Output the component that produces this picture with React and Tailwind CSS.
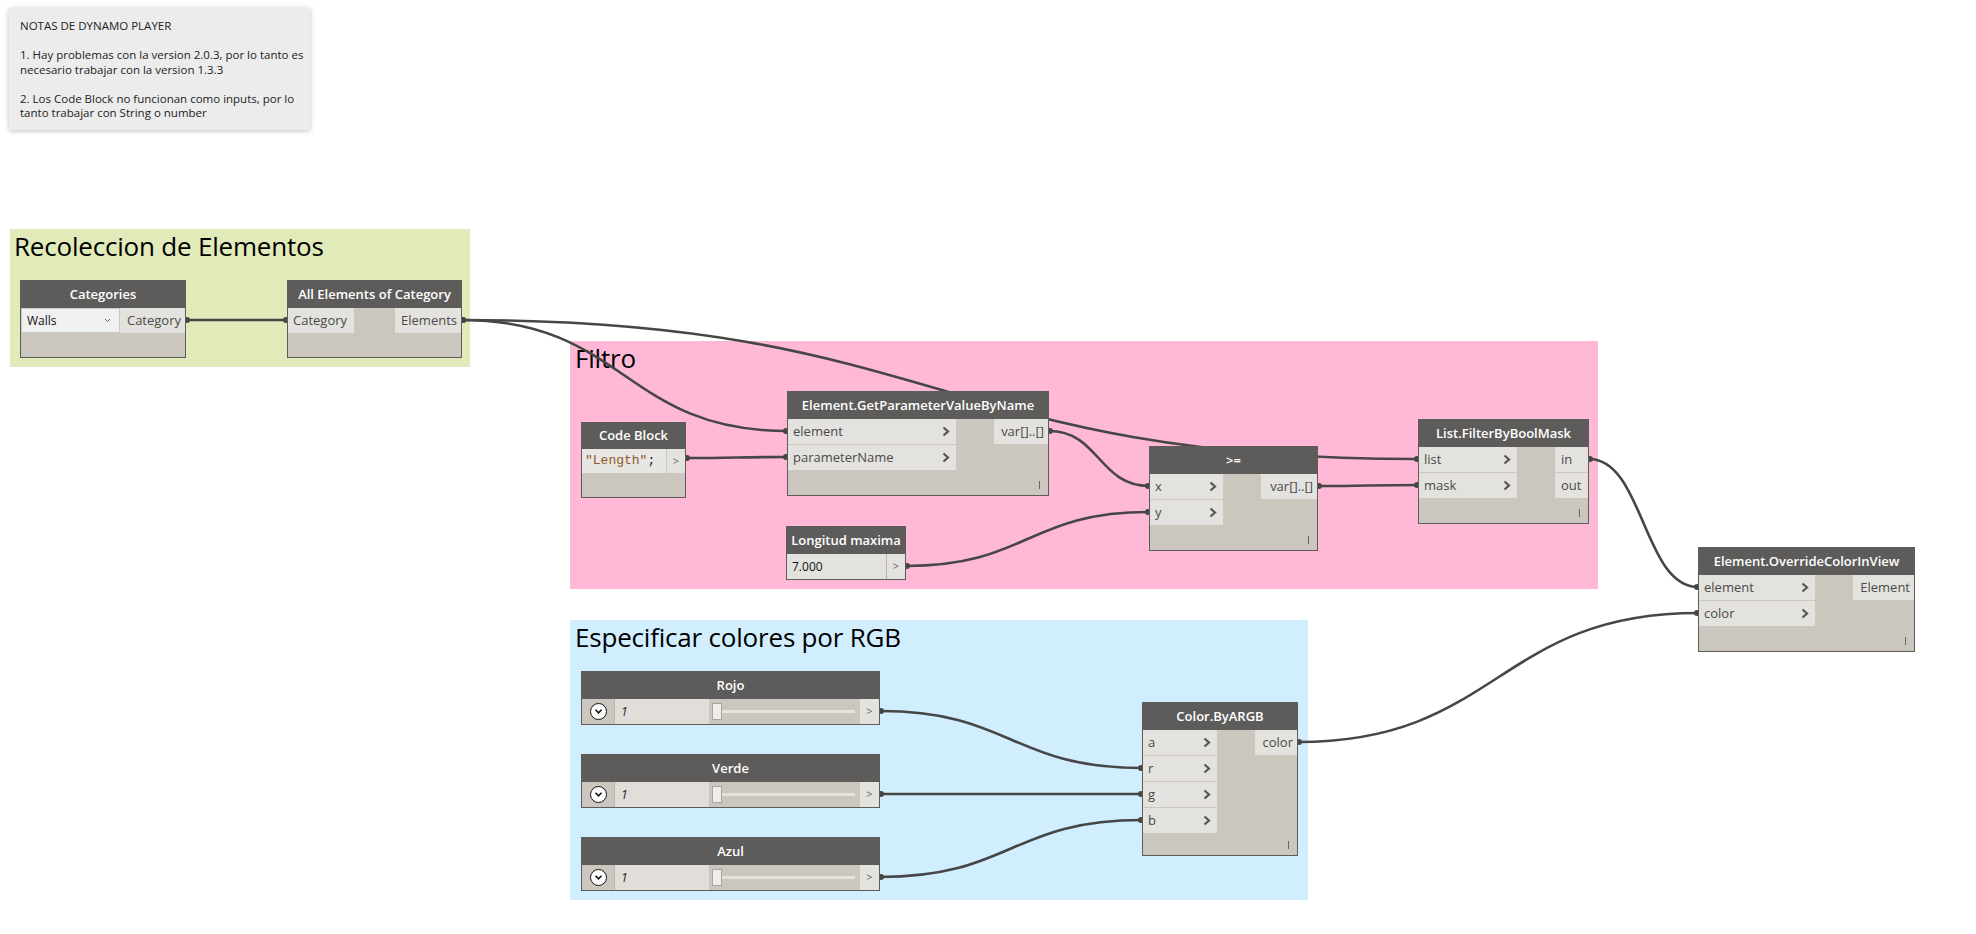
import React from "react";

const F = { fontFamily: '"Open Sans", "Noto Sans", sans-serif' };

function Chev() {
  return (
    <svg width="8" height="11" viewBox="0 0 8 11" className="shrink-0">
      <path d="M1.5 1.5 L6 5.5 L1.5 9.5" fill="none" stroke="#555" strokeWidth="2.2" />
    </svg>
  );
}

function Footer({ h = "h-[25px]" }) {
  return (
    <div className={`${h} flex items-end justify-end pr-[8px] pb-[6px]`}>
      <span className="w-[1px] h-[8px] bg-[#666]" />
    </div>
  );
}

function Node({ pos, title, inW, outW, inputs, outputs, footerH, outLeft }) {
  return (
    <div className={`absolute ${pos} border border-[#5e5c5a] bg-[#cbc6be] flex flex-col`}>
      <div className="h-[27px] bg-[#5e5c5a] text-white font-semibold text-[13px] flex items-center justify-center whitespace-nowrap">
        {title}
      </div>
      <div className="flex justify-between">
        <div className={`${inW} flex flex-col gap-[1px]`}>
          {inputs.map((p) => (
            <div key={p} className="h-[25px] bg-[#e4e2de] flex items-center justify-between pl-[5px] pr-[6px] text-[13px] text-[#4a4a4a]">
              <span>{p}</span>
              <Chev />
            </div>
          ))}
        </div>
        <div className={`${outW} flex flex-col gap-[1px]`}>
          {outputs.map((p) => (
            <div
              key={p}
              className={
                outLeft
                  ? "h-[25px] bg-[#e4e2de] flex items-center justify-start pl-[6px] text-[13px] text-[#4a4a4a] whitespace-nowrap"
                  : "h-[25px] bg-[#e4e2de] flex items-center justify-end pr-[4px] text-[13px] text-[#4a4a4a] whitespace-nowrap"
              }
            >
              {p}
            </div>
          ))}
        </div>
      </div>
      <Footer h={footerH || "h-[25px]"} />
    </div>
  );
}

function Slider({ pos, title }) {
  return (
    <div className={`absolute ${pos} w-[299px] border border-[#5e5c5a] bg-[#cbc6be] flex flex-col`}>
      <div className="h-[27px] bg-[#5e5c5a] text-white font-semibold text-[13px] flex items-center justify-center">
        {title}
      </div>
      <div className="h-[25px] flex">
        <div className="w-[32px] flex items-center justify-center">
          <div className="w-[17px] h-[17px] rounded-full border-[1.5px] border-[#111] bg-white flex items-center justify-center">
            <svg width="9" height="7" viewBox="0 0 9 7">
              <path d="M1.5 1.8 L4.5 4.8 L7.5 1.8" fill="none" stroke="#111" strokeWidth="1.6" />
            </svg>
          </div>
        </div>
        <div className="w-[95px] bg-[#e1deda] border-l border-[#bdb8b0] flex items-center pl-[6px] text-[12px] italic text-[#222]">
          1
        </div>
        <div className="flex-1 relative flex items-center pl-[3px] pr-[5px]">
          <div className="w-[10px] h-[17px] bg-[#eeedeb] border border-[#a9a49c] shrink-0" />
          <div className="flex-1 h-[3px] bg-[#e6e4e0]" />
        </div>
        <div className="w-[19px] bg-[#e4e2de] flex items-center justify-center text-[11px] text-[#666]">&gt;</div>
      </div>
    </div>
  );
}

function wire(x1, y1, x2, y2) {
  const dx = Math.max(Math.abs(x2 - x1) * 0.5, 20);
  return `M${x1} ${y1} C${x1 + dx} ${y1} ${x2 - dx} ${y2} ${x2} ${y2}`;
}

const WIRES = [
  [186, 320, 287, 320],
  [462, 320, 787, 431],
  [462, 320, 1418, 459],
  [686, 458, 787, 457],
  [1049, 431, 1149, 486],
  [906, 566, 1149, 512],
  [1318, 486, 1418, 485],
  [1589, 459, 1698, 587],
  [1298, 742, 1698, 613],
  [880, 711, 1142, 768],
  [880, 794, 1142, 794],
  [880, 877, 1142, 820],
];

export default function App() {
  return (
    <div className="relative w-[1976px] h-[934px] bg-white overflow-hidden" style={F}>
      {/* Note */}
      <div className="absolute left-[9px] top-[8px] w-[301px] h-[122px] bg-[#ececec] shadow-[0_1px_5px_rgba(0,0,0,0.25)] pl-[11px] pt-[11px] text-[11.5px] leading-[14.5px] text-[#222]">
        <div>NOTAS DE DYNAMO PLAYER</div>
        <div className="h-[14.5px]" />
        <div>1. Hay problemas con la version 2.0.3, por lo tanto es</div>
        <div>necesario trabajar con la version 1.3.3</div>
        <div className="h-[14.5px]" />
        <div>2. Los Code Block no funcionan como inputs, por lo</div>
        <div>tanto trabajar con String o number</div>
      </div>

      {/* Groups */}
      <div className="absolute left-[10px] top-[229px] w-[460px] h-[138px] bg-[#e1eab9]">
        <div className="pl-[4px] pt-[0px] text-[26px] leading-[34px] text-black tracking-[-0.2px]">Recoleccion de Elementos</div>
      </div>
      <div className="absolute left-[570px] top-[341px] w-[1028px] h-[248px] bg-[#ffb9d7]">
        <div className="pl-[5px] pt-[0px] text-[26px] leading-[34px] text-black tracking-[-0.2px]">Filtro</div>
      </div>
      <div className="absolute left-[570px] top-[620px] w-[738px] h-[280px] bg-[#d0eefe]">
        <div className="pl-[5px] pt-[0px] text-[26px] leading-[34px] text-black tracking-[-0.2px]">Especificar colores por RGB</div>
      </div>

      {/* Wires */}
      <svg className="absolute left-0 top-0" width="1976" height="934">
        {WIRES.map(([a, b, c, d], i) => (
          <g key={i}>
            <path d={wire(a, b, c, d)} fill="none" stroke="#464646" strokeWidth="2.6" />
            <circle cx={a + 1} cy={b} r="3" fill="#464646" />
            <circle cx={c - 1} cy={d} r="3" fill="#464646" />
          </g>
        ))}
      </svg>

      {/* Categories */}
      <div className="absolute left-[20px] top-[280px] w-[166px] border border-[#5e5c5a] bg-[#cbc6be] flex flex-col">
        <div className="h-[27px] bg-[#5e5c5a] text-white font-semibold text-[13px] flex items-center justify-center">Categories</div>
        <div className="h-[25px] flex">
          <div className="w-[99px] bg-[#f0f0f0] border border-[#c9c9c9] flex items-center justify-between pl-[5px] pr-[8px] text-[12px] text-[#111]">
            <span>Walls</span>
            <svg width="7" height="5" viewBox="0 0 7 5">
              <path d="M1 1 L3.5 3.5 L6 1" fill="none" stroke="#666" strokeWidth="1" />
            </svg>
          </div>
          <div className="flex-1 bg-[#e4e2de] flex items-center justify-end pr-[4px] text-[13px] text-[#4a4a4a]">Category</div>
        </div>
        <div className="h-[24px]" />
      </div>

      {/* All Elements of Category */}
      <div className="absolute left-[287px] top-[280px] w-[175px] border border-[#5e5c5a] bg-[#cbc6be] flex flex-col">
        <div className="h-[27px] bg-[#5e5c5a] text-white font-semibold text-[13px] flex items-center justify-center whitespace-nowrap">All Elements of Category</div>
        <div className="h-[25px] flex justify-between">
          <div className="w-[66px] bg-[#e4e2de] flex items-center pl-[5px] text-[13px] text-[#4a4a4a]">Category</div>
          <div className="w-[66px] bg-[#e4e2de] flex items-center justify-end pr-[4px] text-[13px] text-[#4a4a4a]">Elements</div>
        </div>
        <div className="h-[24px]" />
      </div>

      {/* Code Block */}
      <div className="absolute left-[581px] top-[422px] w-[105px] h-[76px] border border-[#5e5c5a] bg-[#cbc6be] flex flex-col">
        <div className="h-[26px] bg-[#5e5c5a] text-white font-semibold text-[13px] flex items-center justify-center">Code Block</div>
        <div className="h-[24px] flex gap-[1px]">
          <div className="flex-1 bg-[#e8e6e2] flex items-center pl-[3px] text-[13px] whitespace-nowrap" style={{ fontFamily: '"Liberation Mono", "DejaVu Sans Mono", monospace' }}>
            <span className="text-[#8a5a2b]">"Length"</span>
            <span className="text-[#222]">;</span>
          </div>
          <div className="w-[18px] bg-[#e4e2de] flex items-center justify-center text-[11px] text-[#666]">&gt;</div>
        </div>
      </div>

      {/* Element.GetParameterValueByName */}
      <Node
        pos="left-[787px] top-[391px] w-[262px]"
        title="Element.GetParameterValueByName"
        inW="w-[168px]"
        outW="w-[54px]"
        inputs={["element", "parameterName"]}
        outputs={["var[]..[]"]}
      />

      {/* Longitud maxima */}
      <div className="absolute left-[786px] top-[526px] w-[120px] border border-[#5e5c5a] bg-[#cbc6be] flex flex-col">
        <div className="h-[27px] bg-[#5e5c5a] text-white font-semibold text-[13px] flex items-center justify-center whitespace-nowrap">Longitud maxima</div>
        <div className="h-[25px] flex">
          <div className="flex-1 bg-[#e4e2de] flex items-center pl-[5px] text-[12px] text-[#111]">7.000</div>
          <div className="w-[19px] bg-[#e4e2de] border-l border-[#b9b4ac] flex items-center justify-center text-[11px] text-[#666]">&gt;</div>
        </div>
      </div>

      {/* >= */}
      <Node
        pos="left-[1149px] top-[446px] w-[169px]"
        title=">="
        inW="w-[73px]"
        outW="w-[56px]"
        inputs={["x", "y"]}
        outputs={["var[]..[]"]}
      />

      {/* List.FilterByBoolMask */}
      <Node
        pos="left-[1418px] top-[419px] w-[171px]"
        title="List.FilterByBoolMask"
        inW="w-[98px]"
        outW="w-[33px]"
        inputs={["list", "mask"]}
        outputs={["in", "out"]}
        outLeft
      />

      {/* Element.OverrideColorInView */}
      <Node
        pos="left-[1698px] top-[547px] w-[217px]"
        title="Element.OverrideColorInView"
        inW="w-[116px]"
        outW="w-[61px]"
        inputs={["element", "color"]}
        outputs={["Element"]}
      />

      {/* Color.ByARGB */}
      <Node
        pos="left-[1142px] top-[702px] w-[156px]"
        title="Color.ByARGB"
        inW="w-[74px]"
        outW="w-[42px]"
        inputs={["a", "r", "g", "b"]}
        outputs={["color"]}
        footerH="h-[22px]"
      />

      {/* Sliders */}
      <Slider pos="left-[581px] top-[671px]" title="Rojo" />
      <Slider pos="left-[581px] top-[754px]" title="Verde" />
      <Slider pos="left-[581px] top-[837px]" title="Azul" />
    </div>
  );
}
